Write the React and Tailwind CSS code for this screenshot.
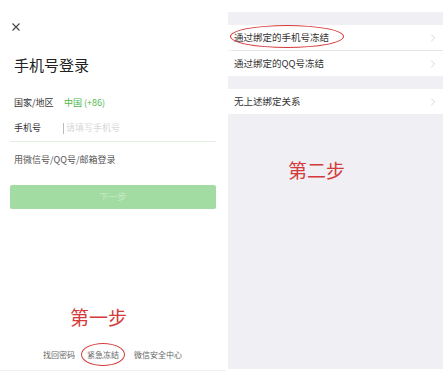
import { ChevronRight } from "lucide-react";

const font = { fontFamily: '"Noto Sans CJK SC", "Noto Sans", sans-serif' };

function Row({ label, circled }) {
  return (
    <div className="relative flex h-[25px] items-center justify-between bg-white pl-[6px] pr-[4px]">
      <span className="text-[9.5px] text-[#333]">{label}</span>
      <ChevronRight className="h-3 w-3 text-[#c8c8c8]" strokeWidth={1.5} />
      {circled && (
        <div className="absolute left-[2px] top-[0px] h-[23px] w-[114px] rounded-[50%] border-[1.5px] border-[#d63b3b]" />
      )}
    </div>
  );
}

export default function App() {
  return (
    <div className="flex h-[371px] w-[446px] bg-white" style={font}>
      <div className="flex w-[226px] flex-col border-b border-[#f0f0f0] px-[10px] pb-[9px]">
        <svg className="ml-[2px] mt-[23px] h-[8px] w-[8px]" viewBox="0 0 8 8" stroke="#444" strokeWidth="1.1">
          <path d="M0.5 0.5 7.5 7.5M7.5 0.5 0.5 7.5" />
        </svg>
        <h1 className="ml-[4px] mt-[25px] text-[15px] leading-[18px] text-[#222]">手机号登录</h1>
        <div className="ml-[4px] mt-[22px] flex items-center text-[9px] leading-[14px]">
          <span className="w-[50px] text-[#333]">国家/地区</span>
          <span className="text-[#4cb84c]">中国 (+86)</span>
        </div>
        <div className="ml-[4px] mt-[11px] flex items-center text-[9px] leading-[14px]">
          <span className="w-[49px] text-[#333]">手机号</span>
          <span className="mr-[2px] h-[11px] w-px bg-[#bbb]" />
          <span className="text-[#d8d8d8]">请填写手机号</span>
        </div>
        <div className="mt-[6px] h-px w-[206px] bg-[#dfeedd]" />
        <p className="ml-[4px] mt-[11px] text-[9px] leading-[14px] text-[#555]">用微信号/QQ号/邮箱登录</p>
        <div className="mt-[18px] flex h-[24px] w-[206px] items-center justify-center rounded-[2px] bg-[#a3dca2] text-[9px] text-[#c4eac3]">
          下一步
        </div>
        <div className="flex-1" />
        <p className="ml-[60px] text-[19px] leading-[24px] text-[#d33a3a]">第一步</p>
        <div className="mt-[20px] flex items-center text-[8px] leading-[12px] text-[#666]">
          <span className="ml-[33px]">找回密码</span>
          <span className="relative ml-[12px]">
            紧急冻结
            <span className="absolute -left-[6px] -top-[6px] h-[23px] w-[44px] rounded-[50%] border-[1.5px] border-[#d63b3b]" />
          </span>
          <span className="ml-[15px]">微信安全中心</span>
        </div>
      </div>
      <div className="ml-[2px] flex h-[369px] w-[215px] flex-col bg-[#f0eff4]">
        <div className="h-[12px] bg-white" />
        <div className="h-[13px]" />
        <Row label="通过绑定的手机号冻结" circled />
        <div className="ml-[4px] h-px bg-[#e5e5e5]" />
        <Row label="通过绑定的QQ号冻结" />
        <div className="h-[13px]" />
        <Row label="无上述绑定关系" />
        <p className="ml-[60px] mt-[44px] text-[19px] leading-[24px] text-[#d33a3a]">第二步</p>
      </div>
    </div>
  );
}
